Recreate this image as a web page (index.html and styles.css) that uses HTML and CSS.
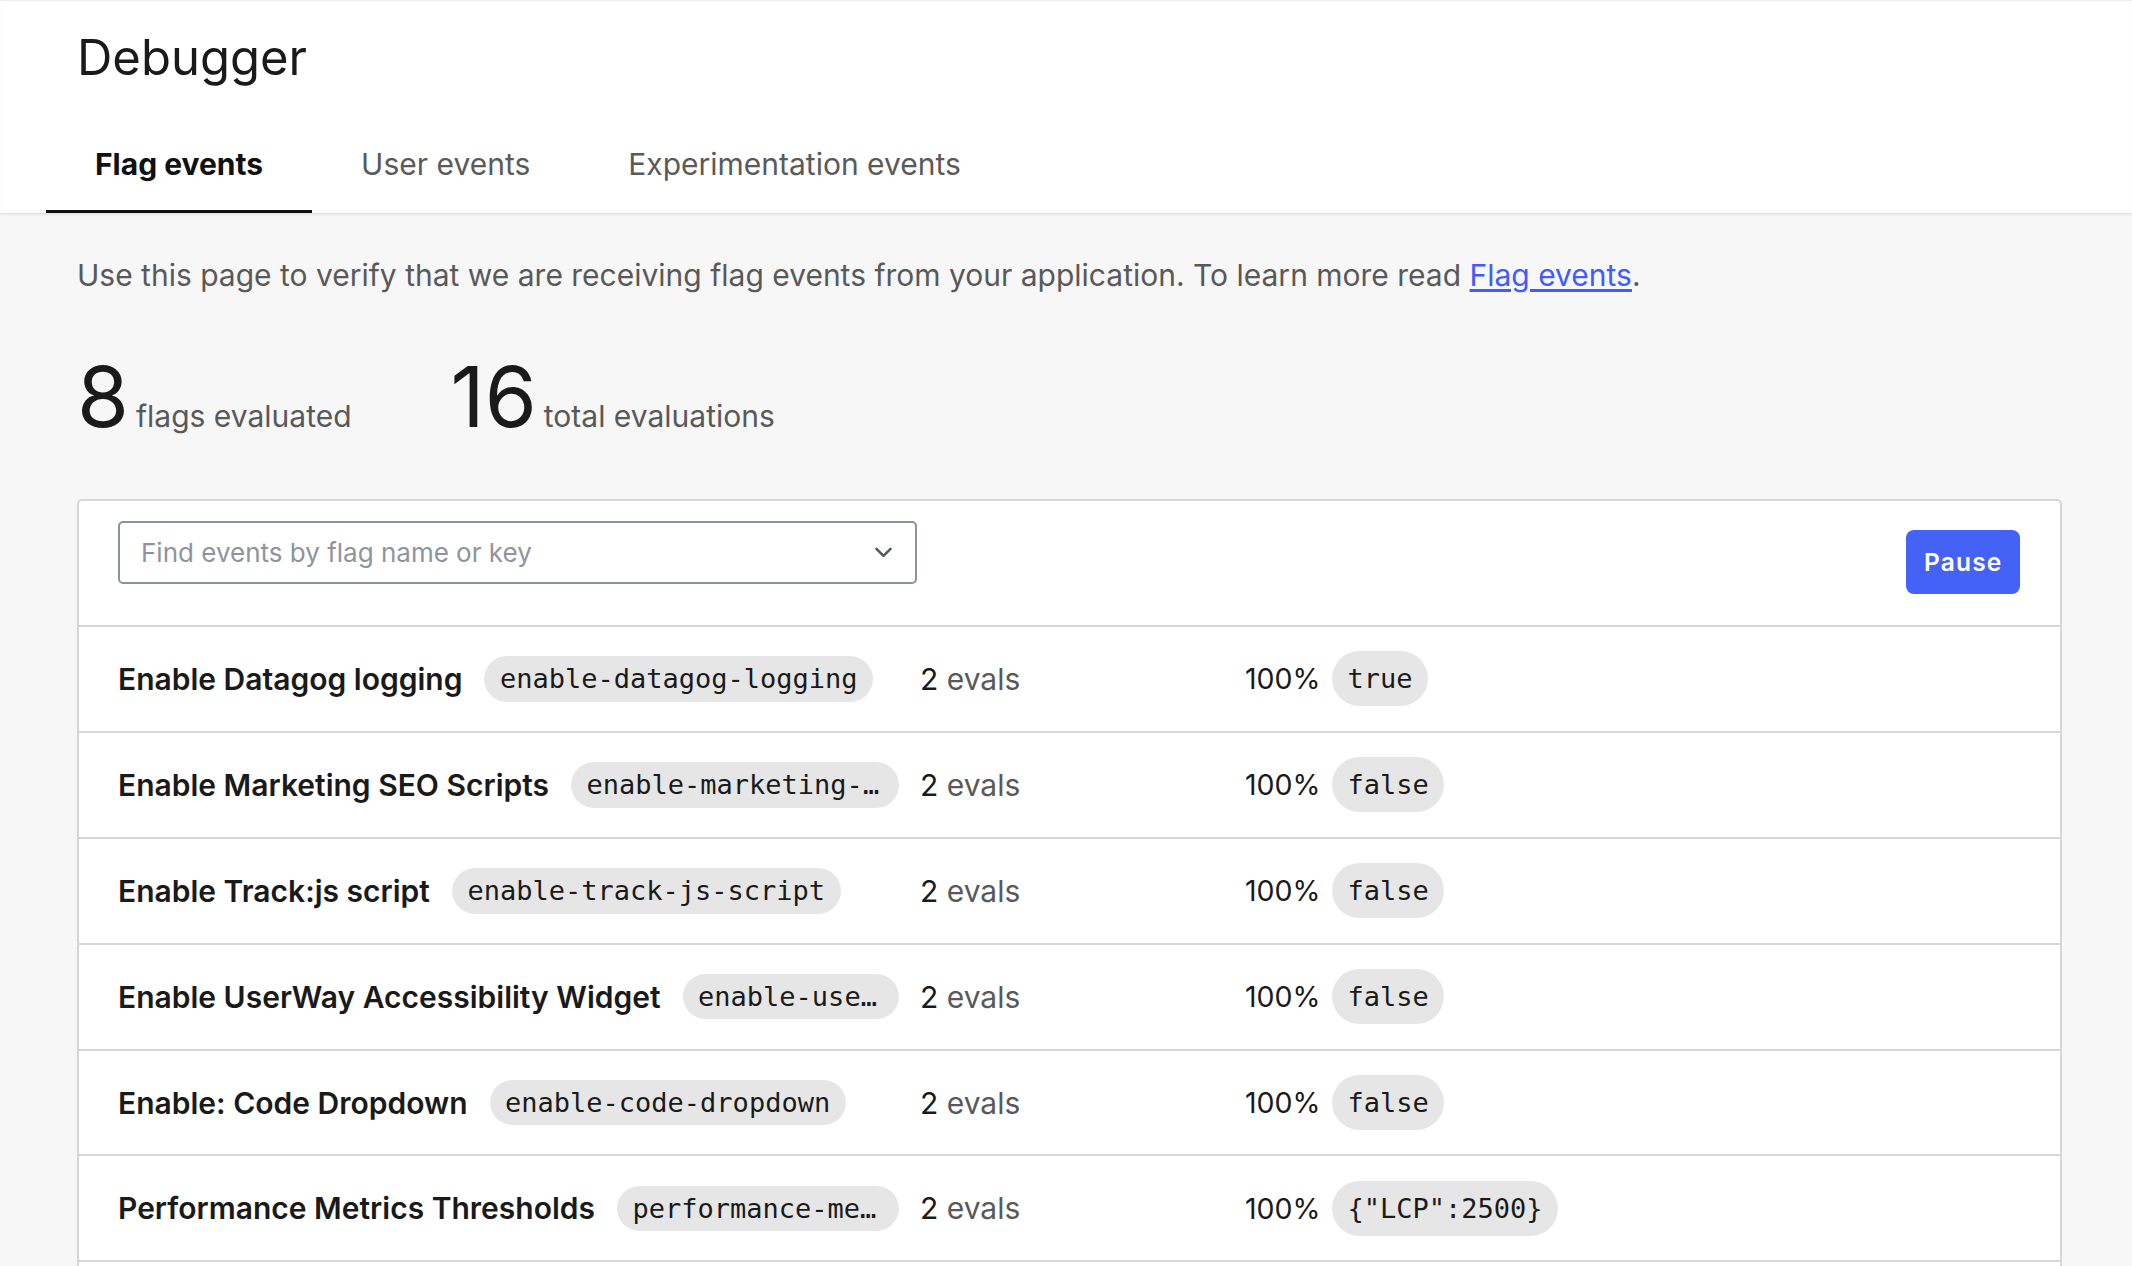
FILE: index.html
```html
<!DOCTYPE html>
<html lang="en">
<head>
<meta charset="utf-8">
<title>Debugger</title>
<link rel="stylesheet" href="styles.css">
</head>
<body>
<header class="page-header">
  <h1 class="page-title">Debugger</h1>
  <nav class="tabs">
    <a class="tab tab-active">Flag events</a>
    <a class="tab">User events</a>
    <a class="tab">Experimentation events</a>
  </nav>
</header>
<main class="content">
  <p class="desc">Use this page to verify that we are receiving flag events from your application. To learn more read <a class="link">Flag events</a>.</p>
  <div class="stats">
    <div class="stat"><span class="stat-num">8</span><span class="stat-label">flags evaluated</span></div>
    <div class="stat"><span class="stat-num">16</span><span class="stat-label">total evaluations</span></div>
  </div>
  <section class="card">
    <div class="toolbar">
      <div class="search">
        <span class="placeholder">Find events by flag name or key</span>
        <svg class="chevron" width="17" height="11" viewBox="0 0 17 11"><path d="M1.5 1.8 L8.5 8.8 L15.5 1.8" fill="none" stroke="#535862" stroke-width="2.6" stroke-linecap="round" stroke-linejoin="round"/></svg>
      </div>
      <button class="pause">Pause</button>
    </div>
    <div class="row">
      <div class="name"><span class="title">Enable Datagog logging</span><code class="key">enable-datagog-logging</code></div>
      <div class="evals"><span class="num">2</span> evals</div>
      <div class="pct"><span>100%</span><code class="val">true</code></div>
    </div>
    <div class="row">
      <div class="name"><span class="title">Enable Marketing SEO Scripts</span><code class="key">enable-marketing-seo-scripts</code></div>
      <div class="evals"><span class="num">2</span> evals</div>
      <div class="pct"><span>100%</span><code class="val">false</code></div>
    </div>
    <div class="row">
      <div class="name"><span class="title">Enable Track:js script</span><code class="key">enable-track-js-script</code></div>
      <div class="evals"><span class="num">2</span> evals</div>
      <div class="pct"><span>100%</span><code class="val">false</code></div>
    </div>
    <div class="row">
      <div class="name"><span class="title">Enable UserWay Accessibility Widget</span><code class="key">enable-userway-accessibility-widget</code></div>
      <div class="evals"><span class="num">2</span> evals</div>
      <div class="pct"><span>100%</span><code class="val">false</code></div>
    </div>
    <div class="row">
      <div class="name"><span class="title">Enable: Code Dropdown</span><code class="key">enable-code-dropdown</code></div>
      <div class="evals"><span class="num">2</span> evals</div>
      <div class="pct"><span>100%</span><code class="val">false</code></div>
    </div>
    <div class="row">
      <div class="name"><span class="title">Performance Metrics Thresholds</span><code class="key">performance-metrics-thresholds</code></div>
      <div class="evals"><span class="num">2</span> evals</div>
      <div class="pct"><span>100%</span><code class="val">{"LCP":2500}</code></div>
    </div>
    <div class="row">
      <div class="name"><span class="title">Show Beta Banner</span><code class="key">show-beta-banner</code></div>
      <div class="evals"><span class="num">2</span> evals</div>
      <div class="pct"><span>100%</span><code class="val">false</code></div>
    </div>
    <div class="row">
      <div class="name"><span class="title">New Checkout Flow</span><code class="key">new-checkout-flow</code></div>
      <div class="evals"><span class="num">2</span> evals</div>
      <div class="pct"><span>100%</span><code class="val">false</code></div>
    </div>
  </section>
</main>
</body>
</html>
```
FILE: styles.css
```css
html, body {
  margin: 0;
  padding: 0;
  overflow: hidden;
}
body {
  background: #f7f7f7;
  font-family: Inter, "Noto Sans", sans-serif;
  color: #1a1a1a;
}
.page-header {
  background: #ffffff;
  padding-top: 28px;
  box-shadow: inset 0 1px 1px rgba(0,0,0,0.08), 0 1px 3px rgba(0,0,0,0.13);
  position: relative;
}
.page-title {
  margin: 0 0 0 77px;
  font-size: 49px;
  line-height: 59px;
  font-weight: 400;
  color: #1a1a1a;
}
.tabs {
  display: flex;
  margin: 28px 0 0 46px;
}
.tab {
  padding: 28px 49px 25px;
  font-size: 30px;
  line-height: 42px;
  color: #5a5a5a;
  border-bottom: 3.5px solid transparent;
  cursor: pointer;
}
.tab-active {
  color: #111111;
  font-weight: 700;
  border-bottom-color: #111111;
}
.content {
  padding: 41px 70px 0 77px;
}
.desc {
  margin: 0;
  font-size: 30px;
  line-height: 42px;
  color: #595959;
}
.link {
  color: #405bff;
  text-decoration: underline;
  text-underline-offset: 3px;
}
.stats {
  display: flex;
  align-items: baseline;
  gap: 99px;
  margin-top: 59px;
}
.stat {
  display: flex;
  align-items: baseline;
  gap: 7px;
}
.stat-num {
  font-size: 84px;
  line-height: 84px;
  font-weight: 400;
  color: #1a1a1a;
}
.stat-label {
  font-size: 30px;
  line-height: 42px;
  color: #595959;
}
.card {
  margin-top: 60px;
  background: #ffffff;
  border: 2px solid #d6d6d6;
  border-radius: 5px;
}
.toolbar {
  display: flex;
  justify-content: space-between;
  align-items: flex-start;
  padding: 20px 40px 31px 39px;
}
.search {
  box-sizing: border-box;
  width: 799px;
  height: 63px;
  border: 2px solid #8c939e;
  border-radius: 5px;
  display: flex;
  align-items: center;
  justify-content: space-between;
  padding: 0 23px 0 21px;
}
.placeholder {
  font-size: 26px;
  color: #8e949d;
}
.pause {
  margin-top: 9px;
  height: 64px;
  padding: 0 17.5px;
  background: #4562f7;
  color: #ffffff;
  border: none;
  border-radius: 8px;
  font-family: Inter, sans-serif;
  font-size: 24.5px;
  font-weight: 600;
  letter-spacing: 1.2px;
}
.row {
  display: grid;
  grid-template-columns: 781px 304px 1fr;
  column-gap: 21px;
  align-items: center;
  height: 103.9px;
  padding: 0 40px 0 39px;
  border-top: 2px solid #d6d6d6;
}
.name {
  display: flex;
  align-items: center;
  gap: 22px;
  min-width: 0;
}
.title {
  flex: none;
  font-size: 30px;
  font-weight: 600;
  white-space: nowrap;
  color: #1a1a1a;
}
.key, .val {
  font-family: "DejaVu Sans Mono", "Liberation Mono", monospace;
  font-size: 27px;
  background: #e6e6e6;
  border-radius: 999px;
  color: #1a1a1a;
  white-space: nowrap;
}
.key {
  padding: 7px 15.5px;
  line-height: 31.7px;
  min-width: 0;
  overflow: hidden;
  text-overflow: ellipsis;
}
.val {
  padding: 12px 15.5px;
  line-height: 31px;
}
.evals {
  font-size: 30px;
  color: #595959;
}
.evals .num {
  color: #1a1a1a;
}
.pct {
  display: flex;
  align-items: center;
  gap: 11.5px;
  font-size: 28.5px;
  color: #1a1a1a;
}
```
